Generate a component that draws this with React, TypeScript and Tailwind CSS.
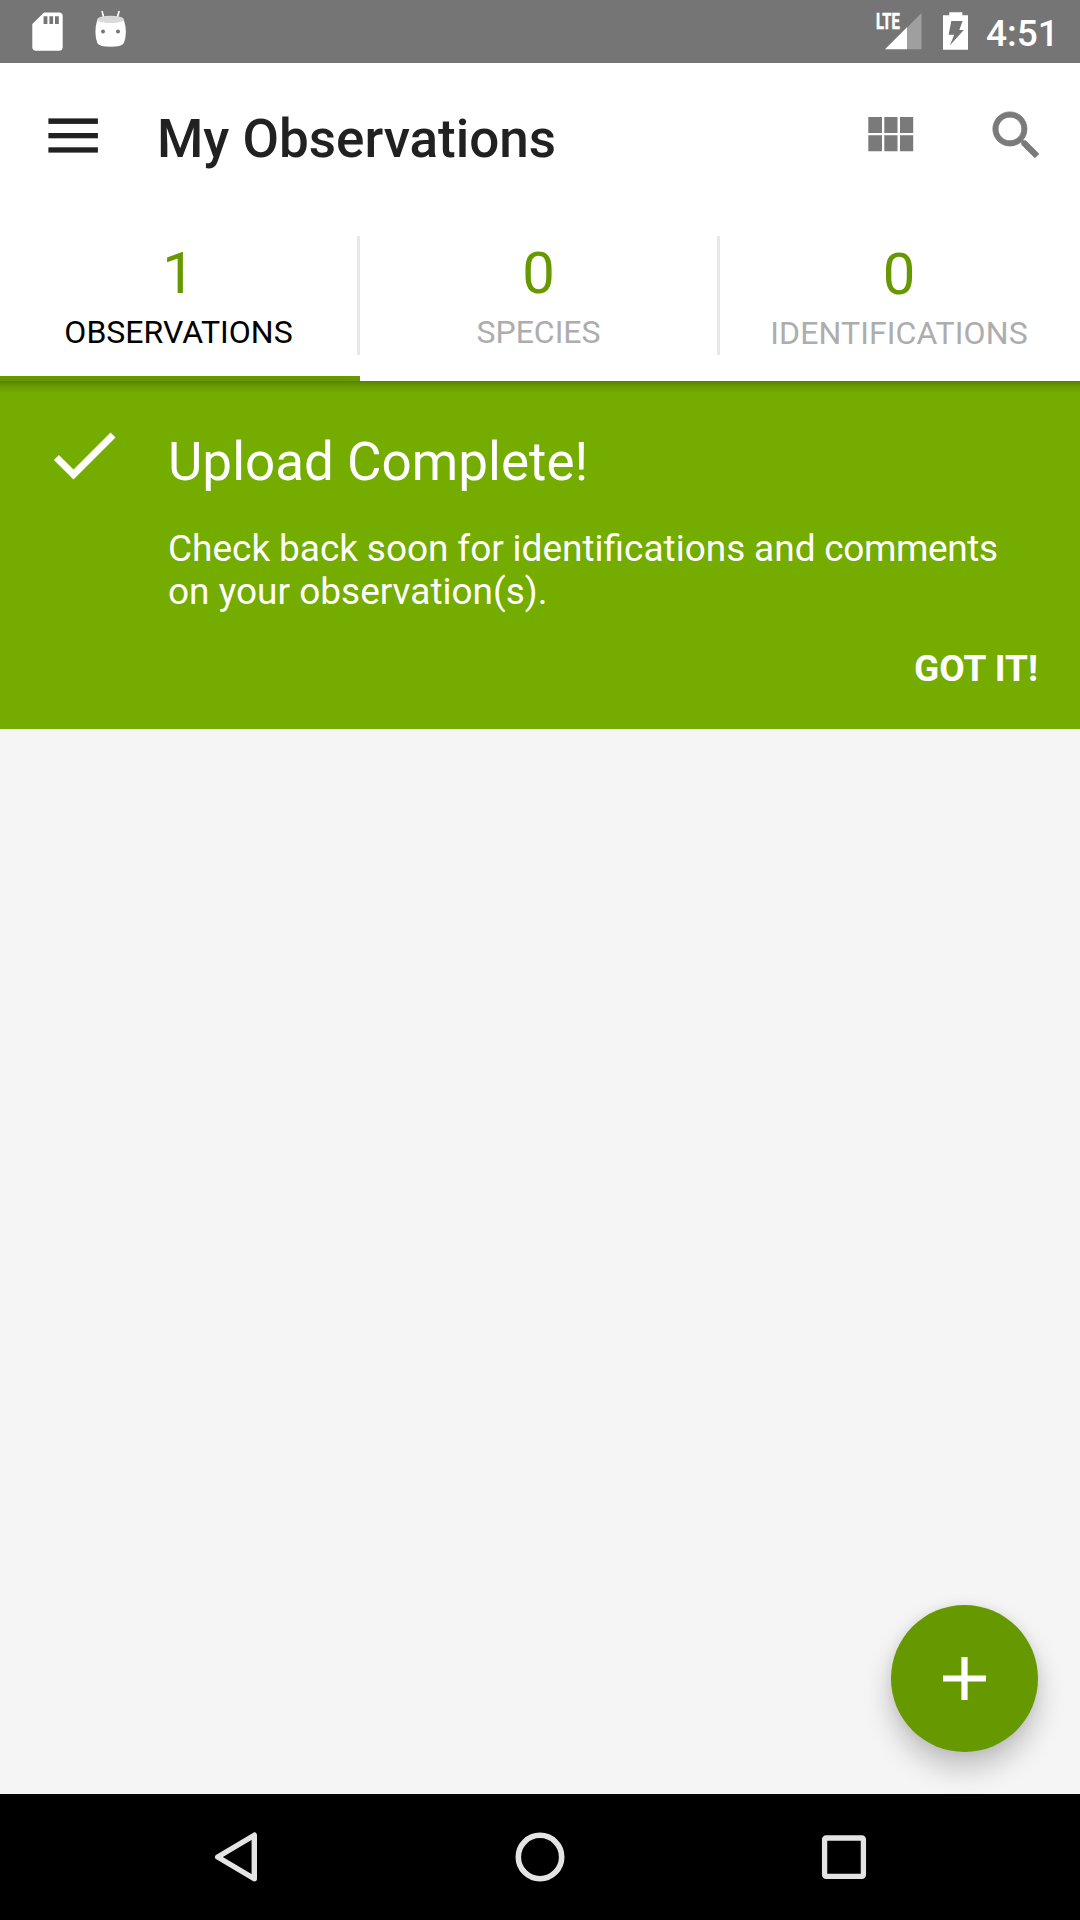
import React from "react";

function StatusBar() {
  return (
    <div className="flex h-[63px] shrink-0 items-start bg-[#757575] text-white">
      <svg className="ml-[32px] h-[63px] w-[31px]" viewBox="32 0 31 63" fill="#fff">
        <path
          fillRule="evenodd"
          d="M44 12.5H59Q62.7 12.5 62.7 16.2V47Q62.7 50.7 59 50.7H36Q32.3 50.7 32.3 47V24ZM43.6 16.3V24H47.4V16.3ZM49.4 16.3V24H53.1V16.3ZM55 16.3V24H58.8V16.3Z"
        />
      </svg>
      <svg className="ml-[32px] h-[63px] w-[32px]" viewBox="95 0 32 63">
        <path d="M102.2 11.6L103.8 18M119 11.6L117.2 18" stroke="#fff" strokeWidth="1.7" strokeLinecap="round" />
        <path d="M97.3 19.5Q110.5 25.5 123.8 19.5Q125.9 26 125.9 32Q125.9 38 123.8 43.2Q121.5 46.7 110.5 46.7Q99.8 46.7 97.4 43.2Q95.4 38 95.4 32Q95.4 26 97.3 19.5Z" fill="#fff" />
        <ellipse cx="110.5" cy="19.4" rx="13.2" ry="3.6" fill="#d9d9d9" />
        <circle cx="103" cy="31.6" r="2" fill="#757575" />
        <circle cx="118" cy="31.6" r="2" fill="#757575" />
      </svg>
      <svg className="ml-auto h-[63px] w-[48px]" viewBox="875 0 48 63">
        <text x="875.9" y="28.8" fill="#fff" stroke="#fff" strokeWidth="0.6" fontFamily="Roboto" fontWeight="700" fontSize="22" textLength="23.8" lengthAdjust="spacingAndGlyphs">
          LTE
        </text>
        <path d="M907 27.5L921.5 13V49.3H907Z" fill="#9f9f9f" />
        <path d="M885 49.3L907 27.3V49.3Z" fill="#fff" />
      </svg>
      <svg className="ml-[20px] h-[63px] w-[25px]" viewBox="943 0 25 63">
        <path
          fill="#fff"
          fillRule="evenodd"
          d="M949.3 12.3H962.3V15.2H968V49.7H943V15.2H949.3ZM951.3 21L962.7 21L959.3 30H963.8L949.8 45.5L954.3 34.8H948.6Z"
        />
      </svg>
      <span className="ml-[18px] mr-[24px] mt-[12px] w-[70px] text-[37px] font-medium leading-[43px] whitespace-nowrap">4:51</span>
    </div>
  );
}

function Toolbar() {
  return (
    <header className="flex h-[147px] shrink-0 items-start">
      <svg className="ml-[48px] h-[147px] w-[50px] shrink-0" viewBox="48 63 50 147" fill="#212121">
        <rect x="48.4" y="118.4" width="49.5" height="5.5" />
        <rect x="48.4" y="133" width="49.5" height="5.3" />
        <rect x="48.4" y="147.3" width="49.5" height="5.3" />
      </svg>
      <h1 className="ml-[59px] mt-[45px] text-[53px] font-medium leading-[62px] whitespace-nowrap text-[#212121]">My Observations</h1>
      <svg className="ml-auto h-[147px] w-[46px] shrink-0" viewBox="868 63 46 147" fill="#7a7a7a">
        <path d="M868.3 117H882V133H868.3ZM884.3 117H897.5V133H884.3ZM900 117H913.2V133H900ZM868.3 135.3H882V151.2H868.3ZM884.3 135.3H897.5V151.2H884.3ZM900 135.3H913.2V151.2H900Z" />
      </svg>
      <svg className="ml-[71px] mr-[32px] mt-[41px] h-[63px] w-[63px] shrink-0" viewBox="0 0 24 24" fill="#7a7a7a">
        <path d="M15.5 14h-.79l-.28-.27A6.471 6.471 0 0 0 16 9.5 6.5 6.5 0 1 0 9.5 16c1.61 0 3.09-.59 4.23-1.57l.27.28v.79l5 4.99L20.49 19l-4.99-5zm-6 0C7.01 14 5 11.99 5 9.5S7.01 5 9.5 5 14 7.01 14 9.5 11.99 14 9.5 14z" stroke="#7a7a7a" strokeWidth="0.3" />
      </svg>
    </header>
  );
}

type TabProps = { count: string; label: string; active?: boolean; divider?: boolean; offset?: string };

function Tab({ count, label, active, divider, offset = "pt-[29px]" }: TabProps) {
  return (
    <div className="flex h-[171px] w-[360px] flex-col">
      <div className="flex h-[166px] items-start">
        <div className={"flex min-w-0 flex-1 flex-col items-center " + offset}>
          <span className="text-[58px] leading-[68px] text-[#669900]">{count}</span>
          <span className={"mt-[6px] text-[32px] leading-[38px] " + (active ? "text-black" : "text-[#adadad]")}>{label}</span>
        </div>
        {divider && <div className="mt-[26px] h-[119px] w-[3px] bg-[#e8e8e8]" />}
      </div>
      {active && <div className="h-[5px] bg-[#669900]" />}
    </div>
  );
}

function UploadBanner() {
  return (
    <section className="flex h-[348px] shrink-0 bg-[#74ac00] text-white">
      <svg className="ml-[42px] mt-[32px] h-[84px] w-[84px] shrink-0" viewBox="0 0 24 24" fill="#fff">
        <path d="M9 16.17L4.83 12l-1.42 1.41L9 19 21 7l-1.41-1.41z" />
      </svg>
      <div className="ml-[42px] mr-[42px] flex flex-1 flex-col">
        <h2 className="mt-[50px] text-[53px] leading-[62px] whitespace-nowrap">Upload Complete!</h2>
        <p className="mt-[34px] text-[37px] leading-[43px] whitespace-nowrap">
          <span className="[word-spacing:-0.4px]">
            Check back soon for identifications and <span className="tracking-[-0.4px]">comments</span>
          </span>
          <br />
          on your observation(s).
        </p>
        <button className="mt-[34px] self-end text-[37px] font-bold leading-[43px]">GOT IT!</button>
      </div>
    </section>
  );
}

function NavBar() {
  return (
    <nav className="flex h-[126px] shrink-0 items-center bg-black">
      <svg className="ml-[212px] h-[126px] w-[48px]" viewBox="212 1794 48 126" fill="none" stroke="#e4e4e4" strokeWidth="5.4" strokeLinejoin="round">
        <path d="M254.3 1835.2V1878.8L217.7 1857Z" />
      </svg>
      <svg className="ml-[255px] h-[126px] w-[50px]" viewBox="515 1794 50 126" fill="none" stroke="#e4e4e4" strokeWidth="5.6">
        <circle cx="540" cy="1857" r="21.7" />
      </svg>
      <svg className="ml-[256px] h-[126px] w-[46px]" viewBox="821 1794 46 126" fill="none" stroke="#e4e4e4" strokeWidth="5.3">
        <rect x="824.6" y="1838" width="38.8" height="38.4" rx="1.5" />
      </svg>
    </nav>
  );
}

export default function App() {
  return (
    <div className="relative flex h-[1920px] w-[1080px] flex-col overflow-hidden bg-[#f5f5f5] font-[Roboto,sans-serif]">
      <StatusBar />
      <div className="relative z-10 bg-white">
        <Toolbar />
        <div className="flex">
          <Tab count="1" label="OBSERVATIONS" active divider />
          <Tab count="0" label="SPECIES" divider />
          <Tab count="0" label="IDENTIFICATIONS" offset="pt-[30px] pr-[2px] tracking-[0.12px]" />
        </div>
        <div className="absolute inset-x-0 top-full h-[12px] bg-linear-to-b from-black/25 via-black/8 to-transparent" />
      </div>
      <UploadBanner />
      <main className="flex-1" />
      <button className="absolute right-[42px] bottom-[168px] flex size-[147px] items-center justify-center rounded-full bg-[#669900] shadow-[0_16px_28px_rgba(0,0,0,0.22),0_0_12px_rgba(0,0,0,0.07)]">
        <svg className="size-[63px]" viewBox="0 0 63 63" fill="#fff">
          <path d="M28.4 10H34.6V28.4H53V34.6H34.6V53H28.4V34.6H10V28.4H28.4Z" />
        </svg>
      </button>
      <NavBar />
    </div>
  );
}
